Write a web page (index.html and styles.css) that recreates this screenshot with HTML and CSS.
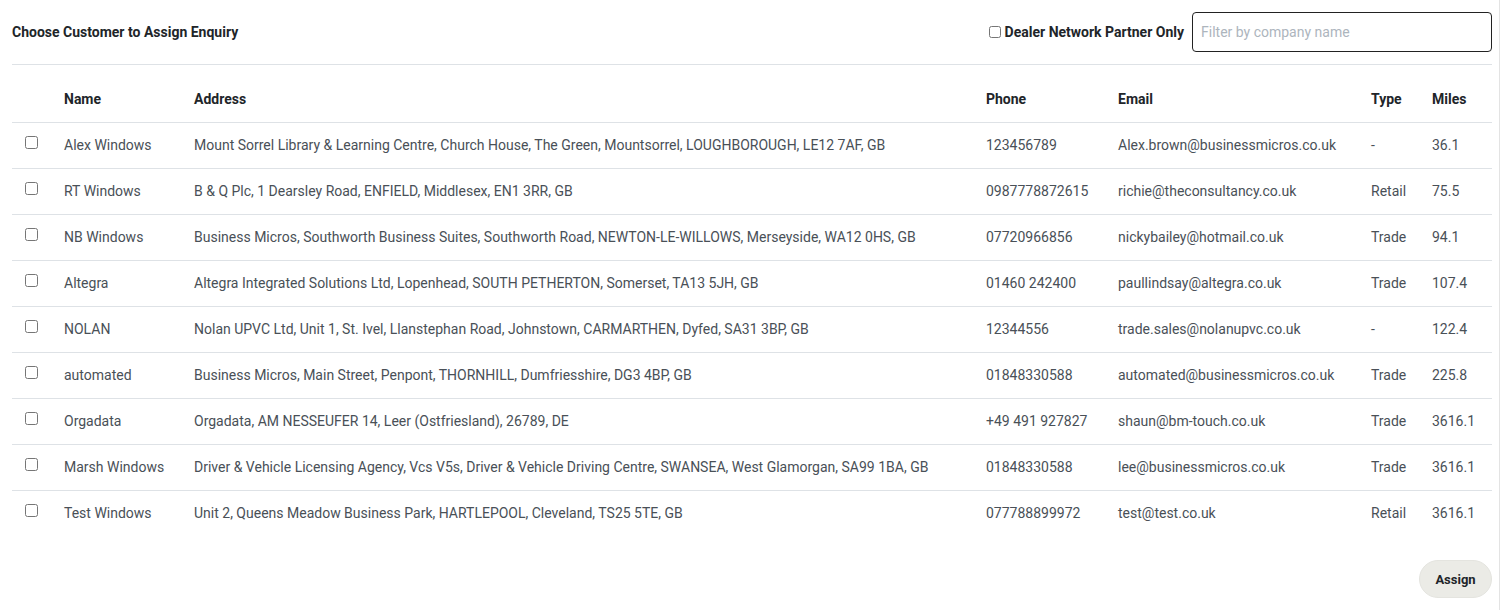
FILE: index.html
```html
<!DOCTYPE html>
<html lang="en">
<head>
    <meta charset="UTF-8">
    <title>Choose Customer to Assign Enquiry</title>
    <link rel="stylesheet" href="styles.css">
</head>
<body>
    <div class="panel">
        <!-- Top bar -->
        <div class="top-bar">
            <div class="title">Choose Customer to Assign Enquiry</div>
            <div class="filters">
                <label class="dealer-only"><input type="checkbox"> Dealer Network Partner Only</label>
                <input type="text" class="filter-input" placeholder="Filter by company name">
            </div>
        </div>

        <table class="customers">
            <colgroup>
                <col style="width: 40px">
                <col style="width: 130px">
                <col style="width: 792px">
                <col style="width: 132px">
                <col style="width: 253px">
                <col style="width: 61px">
                <col style="width: 72px">
            </colgroup>
            <thead>
                <tr>
                    <th></th>
                    <th>Name</th>
                    <th>Address</th>
                    <th>Phone</th>
                    <th>Email</th>
                    <th>Type</th>
                    <th>Miles</th>
                </tr>
            </thead>
            <tbody>
                <tr>
                    <td><input type="checkbox"></td>
                    <td>Alex Windows</td>
                    <td>Mount Sorrel Library &amp; Learning Centre, Church House, The Green, Mountsorrel, LOUGHBOROUGH, LE12 7AF, GB</td>
                    <td>123456789</td>
                    <td>Alex.brown@businessmicros.co.uk</td>
                    <td>-</td>
                    <td>36.1</td>
                </tr>
                <tr>
                    <td><input type="checkbox"></td>
                    <td>RT Windows</td>
                    <td>B &amp; Q Plc, 1 Dearsley Road, ENFIELD, Middlesex, EN1 3RR, GB</td>
                    <td>0987778872615</td>
                    <td>richie@theconsultancy.co.uk</td>
                    <td>Retail</td>
                    <td>75.5</td>
                </tr>
                <tr>
                    <td><input type="checkbox"></td>
                    <td>NB Windows</td>
                    <td>Business Micros, Southworth Business Suites, Southworth Road, NEWTON-LE-WILLOWS, Merseyside, WA12 0HS, GB</td>
                    <td>07720966856</td>
                    <td>nickybailey@hotmail.co.uk</td>
                    <td>Trade</td>
                    <td>94.1</td>
                </tr>
                <tr>
                    <td><input type="checkbox"></td>
                    <td>Altegra</td>
                    <td>Altegra Integrated Solutions Ltd, Lopenhead, SOUTH PETHERTON, Somerset, TA13 5JH, GB</td>
                    <td>01460 242400</td>
                    <td>paullindsay@altegra.co.uk</td>
                    <td>Trade</td>
                    <td>107.4</td>
                </tr>
                <tr>
                    <td><input type="checkbox"></td>
                    <td>NOLAN</td>
                    <td>Nolan UPVC Ltd, Unit 1, St. Ivel, Llanstephan Road, Johnstown, CARMARTHEN, Dyfed, SA31 3BP, GB</td>
                    <td>12344556</td>
                    <td>trade.sales@nolanupvc.co.uk</td>
                    <td>-</td>
                    <td>122.4</td>
                </tr>
                <tr>
                    <td><input type="checkbox"></td>
                    <td>automated</td>
                    <td>Business Micros, Main Street, Penpont, THORNHILL, Dumfriesshire, DG3 4BP, GB</td>
                    <td>01848330588</td>
                    <td>automated@businessmicros.co.uk</td>
                    <td>Trade</td>
                    <td>225.8</td>
                </tr>
                <tr>
                    <td><input type="checkbox"></td>
                    <td>Orgadata</td>
                    <td>Orgadata, AM NESSEUFER 14, Leer (Ostfriesland), 26789, DE</td>
                    <td>+49 491 927827</td>
                    <td>shaun@bm-touch.co.uk</td>
                    <td>Trade</td>
                    <td>3616.1</td>
                </tr>
                <tr>
                    <td><input type="checkbox"></td>
                    <td>Marsh Windows</td>
                    <td>Driver &amp; Vehicle Licensing Agency, Vcs V5s, Driver &amp; Vehicle Driving Centre, SWANSEA, West Glamorgan, SA99 1BA, GB</td>
                    <td>01848330588</td>
                    <td>lee@businessmicros.co.uk</td>
                    <td>Trade</td>
                    <td>3616.1</td>
                </tr>
                <tr>
                    <td><input type="checkbox"></td>
                    <td>Test Windows</td>
                    <td>Unit 2, Queens Meadow Business Park, HARTLEPOOL, Cleveland, TS25 5TE, GB</td>
                    <td>077788899972</td>
                    <td>test@test.co.uk</td>
                    <td>Retail</td>
                    <td>3616.1</td>
                </tr>
            </tbody>
        </table>

        <div class="actions">
            <button class="assign-button">Assign</button>
        </div>
    </div>
</body>
</html>
```

FILE: styles.css
```css
html, body {
    margin: 0;
    padding: 0;
    height: 100%;
    overflow: hidden;
}

body {
    background-color: white;
    font-family: Roboto, "Liberation Sans", sans-serif;
    font-size: 14px;
    color: #495057;
}

/* Panel with the light edge on the right */
.panel {
    width: 1480px;
    height: 100%;
    padding: 0 7px 0 12px;
    border-right: 1px solid #e3e3e3;
}

.top-bar {
    display: flex;
    align-items: center;
    justify-content: space-between;
    padding: 12px 0;
    border-bottom: 1px solid #dee2e6;
}

.title {
    font-weight: 700;
    color: #212529;
}

.filters {
    display: flex;
    align-items: center;
    gap: 8px;
}

.dealer-only {
    display: flex;
    align-items: center;
    font-weight: 700;
    color: #212529;
}

.dealer-only input {
    width: 12px;
    height: 12px;
    margin: 0 4px 0 0;
}

.filter-input {
    box-sizing: border-box;
    width: 300px;
    height: 40px;
    padding: 0 8px;
    font-family: Roboto, "Liberation Sans", sans-serif;
    font-size: 14px;
    color: #495057;
    border: 1px solid #222;
    border-radius: 4px;
}

.filter-input::placeholder {
    color: #adb5bd;
}

.filter-input:focus {
    outline: none;
}

.customers {
    width: 1480px;
    margin-top: 12px;
    border-collapse: collapse;
    table-layout: fixed;
}

.customers th,
.customers td {
    height: 44px;
    padding: 0 0 1px 12px;
    text-align: left;
    vertical-align: middle;
    white-space: nowrap;
    border-bottom: 1px solid #dee2e6;
}

.customers th {
    font-weight: 700;
    color: #212529;
}

.customers tbody tr:last-child td {
    border-bottom: none;
}

.customers td:first-child {
    padding-left: 13px;
}

.customers td input {
    width: 13px;
    height: 13px;
    margin: 0;
    display: block;
    position: relative;
    top: -3px;
}

.actions {
    display: flex;
    justify-content: flex-end;
    margin-top: 24px;
}

.assign-button {
    width: 73px;
    height: 38px;
    border: 1px solid #e4e4df;
    border-radius: 20px;
    background-color: #ebebe6;
    font-family: Roboto, "Liberation Sans", sans-serif;
    font-size: 13px;
    font-weight: 700;
    color: #212529;
}
```
